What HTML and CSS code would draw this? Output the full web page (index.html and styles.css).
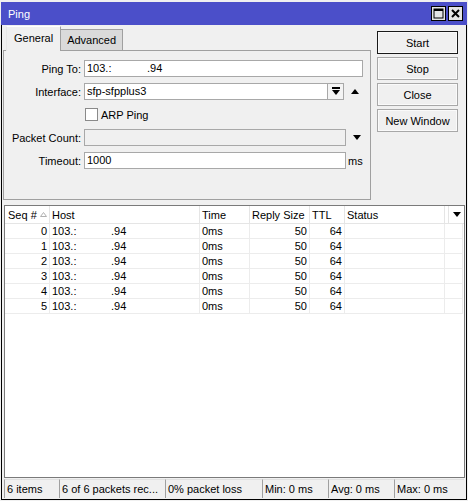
FILE: index.html
```html
<!DOCTYPE html>
<html>
<head>
<meta charset="utf-8">
<link rel="stylesheet" href="styles.css">
</head>
<body>
<div class="win">
  <div class="titlebar">
    <span class="title-text">Ping</span>
    <div class="tbtns">
      <span class="tbtn"><svg width="11" height="11" viewBox="0 0 11 11"><rect x="1" y="1" width="9" height="9" fill="none" stroke="#000" stroke-width="1"/><rect x="1" y="1" width="9" height="2" fill="#000"/></svg></span>
      <span class="tbtn"><svg width="11" height="11" viewBox="0 0 11 11"><path d="M2 2 L9 9 M9 2 L2 9" stroke="#000" stroke-width="2"/></svg></span>
    </div>
  </div>
  <div class="frame">
    <div class="top">
      <div class="tabbox">
        <div class="tabs">
          <div class="tab active">General</div>
          <div class="tab">Advanced</div>
        </div>
        <div class="panel">
          <div class="row">
            <span class="lbl">Ping To:</span>
            <div class="input w-ping"><span class="seg-a a-ping">103.:</span><span class="rest">.94</span></div>
          </div>
          <div class="row">
            <span class="lbl">Interface:</span>
            <div class="input w-iface">sfp-sfpplus3</div>
            <span class="ddbtn"><svg width="8" height="9" viewBox="0 0 8 9"><rect x="0" y="0" width="8" height="2" fill="#000"/><path d="M0 3 H8 L4 8 Z" fill="#000"/></svg></span>
            <span class="arrow"><svg width="8" height="5" viewBox="0 0 8 5"><path d="M0 5 H8 L4 0 Z" fill="#000"/></svg></span>
          </div>
          <div class="row">
            <span class="lbl"></span>
            <span class="check"></span>
            <span class="check-lbl">ARP Ping</span>
          </div>
          <div class="row">
            <span class="lbl">Packet Count:</span>
            <div class="input w-short disabled"></div>
            <span class="arrow arrow-far"><svg width="8" height="5" viewBox="0 0 8 5"><path d="M0 0 H8 L4 5 Z" fill="#000"/></svg></span>
          </div>
          <div class="row">
            <span class="lbl">Timeout:</span>
            <div class="input w-short">1000</div>
            <span class="unit">ms</span>
          </div>
        </div>
      </div>
      <div class="buttons">
        <div class="btn default">Start</div>
        <div class="btn">Stop</div>
        <div class="btn">Close</div>
        <div class="btn">New Window</div>
      </div>
    </div>

    <div class="grid">
      <div class="ghead">
        <div class="hc c-seq">Seq # <svg class="sort" width="7" height="5" viewBox="0 0 7 5"><path d="M0.5 4.5 H6.5 L3.5 0.5 Z" fill="none" stroke="#b0b0b0" stroke-width="1"/></svg></div>
        <div class="hc">Host</div>
        <div class="hc">Time</div>
        <div class="hc">Reply Size</div>
        <div class="hc">TTL</div>
        <div class="hc">Status</div>
        <div class="hc"></div>
        <div class="hc hdd"><svg width="8" height="5" viewBox="0 0 8 5"><path d="M0 0 H8 L4 5 Z" fill="#000"/></svg></div>
      </div>
      <div class="grow"><div class="gc num">0</div><div class="gc"><span class="seg-a a-host">103.:</span><span class="rest">.94</span></div><div class="gc">0ms</div><div class="gc num">50</div><div class="gc num">64</div><div class="gc"></div><div class="gc last"></div></div>
      <div class="grow"><div class="gc num">1</div><div class="gc"><span class="seg-a a-host">103.:</span><span class="rest">.94</span></div><div class="gc">0ms</div><div class="gc num">50</div><div class="gc num">64</div><div class="gc"></div><div class="gc last"></div></div>
      <div class="grow"><div class="gc num">2</div><div class="gc"><span class="seg-a a-host">103.:</span><span class="rest">.94</span></div><div class="gc">0ms</div><div class="gc num">50</div><div class="gc num">64</div><div class="gc"></div><div class="gc last"></div></div>
      <div class="grow"><div class="gc num">3</div><div class="gc"><span class="seg-a a-host">103.:</span><span class="rest">.94</span></div><div class="gc">0ms</div><div class="gc num">50</div><div class="gc num">64</div><div class="gc"></div><div class="gc last"></div></div>
      <div class="grow"><div class="gc num">4</div><div class="gc"><span class="seg-a a-host">103.:</span><span class="rest">.94</span></div><div class="gc">0ms</div><div class="gc num">50</div><div class="gc num">64</div><div class="gc"></div><div class="gc last"></div></div>
      <div class="grow"><div class="gc num">5</div><div class="gc"><span class="seg-a a-host">103.:</span><span class="rest">.94</span></div><div class="gc">0ms</div><div class="gc num">50</div><div class="gc num">64</div><div class="gc"></div><div class="gc last"></div></div>
    </div>

    <div class="status">
      <div class="seg s1">6 items</div>
      <div class="seg s2">6 of 6 packets rec...</div>
      <div class="seg s3">0% packet loss</div>
      <div class="seg s4">Min: 0 ms</div>
      <div class="seg s5">Avg: 0 ms</div>
      <div class="seg s6">Max: 0 ms</div>
    </div>
  </div>
</div>
</body>
</html>
```

FILE: styles.css
```css
* { box-sizing: border-box; }

html, body {
  margin: 0;
  padding: 0;
  background: #f0f0f0;
  font-family: "Liberation Sans", Arial, sans-serif;
  font-size: 11px;
  color: #000;
}

.win {
  width: 466px;
  margin: 2px 0 0 1px;
}

.titlebar {
  height: 23px;
  background: #4b4fc9;
  display: flex;
  align-items: center;
  justify-content: space-between;
  padding: 0 4px 0 7px;
}

.title-text {
  color: #fff;
  font-size: 11px;
}

.tbtns {
  display: flex;
  gap: 2px;
}

.tbtn {
  width: 15px;
  height: 15px;
  background: #e4e4e4;
  border: 1px solid #000;
  display: flex;
  align-items: center;
  justify-content: center;
}

.frame {
  height: 475px;
  border: 1px solid #000;
  border-top: none;
  background: #f0f0f0;
}

.top {
  display: flex;
  height: 180px;
}

.tabbox {
  margin: 1px 0 0 1px;
  width: 368px;
}

.tabs {
  display: flex;
  height: 24px;
  align-items: flex-end;
  padding-left: 3px;
}

.tab {
  height: 21px;
  padding: 0 6px;
  background: #dadada;
  border: 1px solid #a0a0a0;
  border-bottom: none;
  border-left: none;
  display: flex;
  align-items: center;
}

.tab.active {
  height: 25px;
  margin-bottom: -1px;
  background: #f0f0f0;
  border-left: 1px solid #e8e8e8;
  border-top: 1px solid #ffffff;
  padding: 0 7px 2px 7px;
  position: relative;
  z-index: 1;
}

.panel {
  height: 150px;
  border: 1px solid #a0a0a0;
  padding-top: 9px;
  display: flex;
  flex-direction: column;
  gap: 6px;
}

.row {
  display: flex;
  align-items: center;
  height: 17px;
}

.lbl {
  width: 77px;
  text-align: right;
  margin-right: 3px;
  flex: none;
  white-space: nowrap;
}

.input {
  height: 17px;
  background: #fff;
  border: 1px solid #a8a8a8;
  padding: 0 2px;
  line-height: 15px;
  white-space: nowrap;
  overflow: hidden;
  flex: none;
}

.input.disabled { background: #f0f0f0; }

.w-ping { width: 279px; }
.w-iface { width: 244px; }
.w-short { width: 262px; }

.seg-a {
  display: inline-block;
  vertical-align: top;
  white-space: nowrap;
}
.a-ping { width: 60px; }
.a-host { width: 59px; }
.rest { display: inline-block; vertical-align: top; }

.ddbtn {
  width: 17px;
  height: 17px;
  margin-left: -1px;
  border: 1px solid #a8a8a8;
  background: #f4f4f4;
  display: flex;
  align-items: center;
  justify-content: center;
  flex: none;
}

.arrow {
  margin-left: 7px;
  display: flex;
  align-items: center;
}
.arrow-far { margin-left: 7px; }

.check {
  width: 13px;
  height: 13px;
  border: 1px solid #8a8a8a;
  background: #fff;
  margin-left: 1px;
  flex: none;
}

.check-lbl {
  margin-left: 3px;
}

.unit {
  margin-left: 2px;
}

.buttons {
  margin: 6px 0 0 6px;
  display: flex;
  flex-direction: column;
  gap: 3px;
}

.btn {
  width: 81px;
  height: 23px;
  border: 1px solid #a8a8a8;
  background: #f0f0f0;
  box-shadow: inset 0 0 0 1px #fafafa;
  display: flex;
  align-items: center;
  justify-content: center;
}

.btn.default {
  border-color: #1a1a1a;
}

.grid {
  margin: 0 0 0 2px;
  width: 461px;
  height: 273px;
  border: 1px solid #7a7a7a;
  background: #fff;
}

.ghead, .grow {
  display: grid;
  grid-template-columns: 45px 150px 50px 60px 35px 100px 4px 15px;
}

.grow {
  grid-template-columns: 45px 150px 50px 60px 35px 100px 19px;
  height: 15px;
}

.ghead {
  height: 18px;
  border-bottom: 1px solid #e5e5e5;
}

.hc {
  border-right: 1px solid #e5e5e5;
  padding-left: 2px;
  display: flex;
  align-items: center;
  white-space: nowrap;
}
.hc.c-seq { padding-left: 3px; }
.hc.hdd { border-right: none; justify-content: center; padding-left: 0; }

.sort { margin-left: 3px; }

.gc {
  border-right: 1px solid #ececec;
  border-bottom: 1px solid #ececec;
  padding: 0 2px 0 2px;
  line-height: 14px;
  white-space: nowrap;
  overflow: hidden;
}
.gc.num { text-align: right; padding-right: 2px; }
.gc.last { border-right: 1px solid #ececec; margin-right: 1px; }

.status {
  margin: 1px 0 0 2px;
  display: flex;
  height: 19px;
}

.seg {
  height: 19px;
  border-left: 1px solid #a0a0a0;
  border-top: 1px solid #e0e0e0;
  padding-left: 2px;
  display: flex;
  align-items: center;
  white-space: nowrap;
  overflow: hidden;
}
.s1 { width: 55px; }
.s2 { width: 106px; }
.s3 { width: 97px; }
.s4 { width: 66px; }
.s5 { width: 66px; }
.s6 { width: 70px; }
```
